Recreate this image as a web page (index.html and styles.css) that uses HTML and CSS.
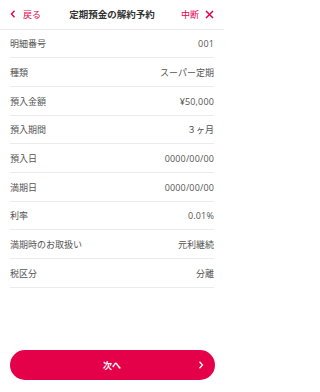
FILE: index.html
```html
<!DOCTYPE html>
<html lang="ja">
<head>
<meta charset="utf-8">
<title>定期預金の解約予約</title>
<link rel="stylesheet" href="styles.css">
</head>
<body>
<div class="screen">
  <header class="header">
    <div class="back">
      <svg class="chev" width="6" height="8" viewBox="0 0 6 8"><path d="M4.5 0.8 L1.5 4 L4.5 7.2" fill="none" stroke="#e5004a" stroke-width="1.4"/></svg>
      <span>戻る</span>
    </div>
    <div class="title">定期預金の解約予約</div>
    <div class="stop">
      <span>中断</span>
      <svg width="9" height="9" viewBox="0 0 9 9"><path d="M1 1 L8 8 M8 1 L1 8" fill="none" stroke="#e5004a" stroke-width="1.5"/></svg>
    </div>
  </header>
  <ul class="list">
    <li class="row"><span class="label">明細番号</span><span class="value num">001</span></li>
    <li class="row"><span class="label">種類</span><span class="value">スーパー定期</span></li>
    <li class="row"><span class="label">預入金額</span><span class="value num">¥50,000</span></li>
    <li class="row"><span class="label">預入期間</span><span class="value">３ヶ月</span></li>
    <li class="row"><span class="label">預入日</span><span class="value num">0000/00/00</span></li>
    <li class="row"><span class="label">満期日</span><span class="value num">0000/00/00</span></li>
    <li class="row"><span class="label">利率</span><span class="value num">0.01%</span></li>
    <li class="row"><span class="label">満期時のお取扱い</span><span class="value">元利継続</span></li>
    <li class="row"><span class="label">税区分</span><span class="value">分離</span></li>
  </ul>
  <div class="spacer"></div>
  <div class="footer">
    <button class="next">
      <span class="next-label">次へ</span>
      <svg class="next-chev" width="6" height="8" viewBox="0 0 6 8"><path d="M1.5 0.8 L4.5 4 L1.5 7.2" fill="none" stroke="#ffffff" stroke-width="1.3"/></svg>
    </button>
  </div>
</div>
</body>
</html>
```
FILE: styles.css
```css
* { box-sizing: border-box; }
html, body {
  margin: 0;
  padding: 0;
  background: #ffffff;
}
body {
  font-family: "Noto Sans CJK JP", "Noto Sans", sans-serif;
  color: #555555;
}
.screen {
  width: 224px;
  height: 392px;
  display: flex;
  flex-direction: column;
}
.header {
  height: 29.5px;
  border-bottom: 1px solid #ebebeb;
  display: flex;
  align-items: center;
  justify-content: space-between;
  padding: 0 10px 0 10px;
  position: relative;
}
.back, .stop {
  display: flex;
  align-items: center;
  color: #e5004a;
  font-size: 9px;
  line-height: 1;
}
.back .chev { margin-right: 7px; margin-left: 0; }
.stop span { margin-right: 6px; }
.title {
  position: absolute;
  left: 0;
  right: 0;
  text-align: center;
  font-size: 9.5px;
  font-weight: bold;
  color: #333333;
  line-height: 1;
  pointer-events: none;
}
.list {
  list-style: none;
  margin: 0;
  padding: 0 10px;
}
.row {
  height: 28.7px;
  border-bottom: 1px solid #ebebeb;
  display: flex;
  justify-content: space-between;
  align-items: center;
  font-size: 9px;
  line-height: 1;
  color: #555555;
  padding-top: 1px;
}
.value { color: #555555; }
.num {
  font-family: "Open Sans", "Noto Sans CJK JP", sans-serif;
  font-size: 9px;
  letter-spacing: 0.15px;
}
.spacer { flex: 1; }
.footer {
  padding: 0 9.5px 12px 9.5px;
}
.next {
  width: 100%;
  height: 30px;
  border: none;
  border-radius: 15px;
  background: #e5004a;
  color: #ffffff;
  font-family: "Noto Sans CJK JP", "Noto Sans", sans-serif;
  font-size: 9px;
  font-weight: bold;
  display: flex;
  align-items: center;
  justify-content: center;
  position: relative;
  padding: 0;
}
.next-chev {
  position: absolute;
  right: 11px;
  top: 11px;
}
```
